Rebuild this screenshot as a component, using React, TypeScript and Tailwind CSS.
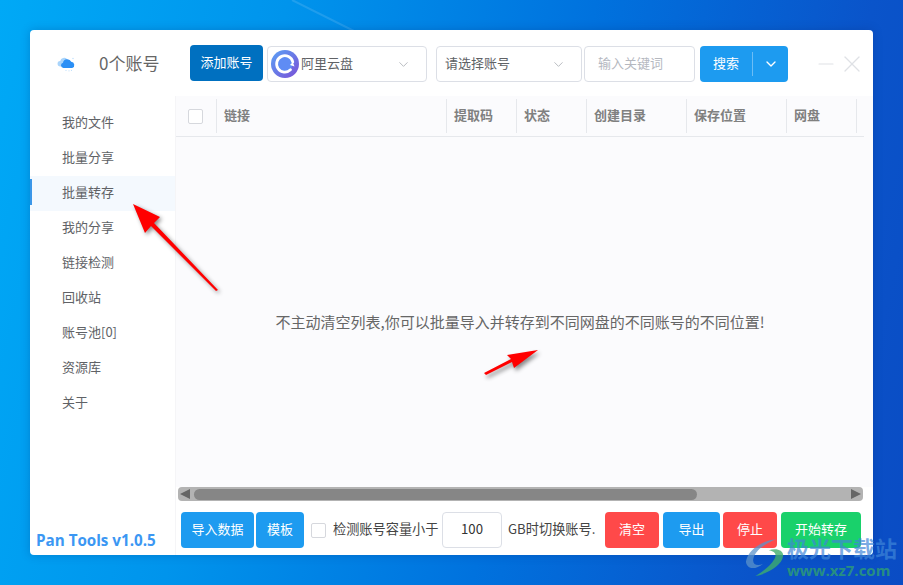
import { ChevronDown, X, Minus } from 'lucide-react'

const navItems = ['我的文件', '批量分享', '批量转存', '我的分享', '链接检测', '回收站', '账号池[0]', '资源库', '关于']

const columns = [
  { label: '链接', width: 'w-[230px]' },
  { label: '提取码', width: 'w-[70px]' },
  { label: '状态', width: 'w-[70px]' },
  { label: '创建目录', width: 'w-[100px]' },
  { label: '保存位置', width: 'w-[100px]' },
  { label: '网盘', width: 'w-[70px]' },
]

function CloudLogo() {
  return (
    <svg width="20" height="16" viewBox="0 0 20 16">
      <path d="M3.500 10.500a2.800 2.800 0 0 1-.3-5.600A4 4 0 0 1 10 3l-2 7.500z" fill="#a9d4fb" />
      <path d="M6.500 12a2.700 2.700 0 0 1-.5-5.300 4.300 4.300 0 0 1 8.200-.9 3.200 3.200 0 0 1 1 6.200z" fill="#2b8ff5" />
      <circle cx="16" cy="2.500" r="0.700" fill="#b9dcfb" />
      <circle cx="9" cy="14.500" r="0.600" fill="#b9dcfb" />
      <circle cx="12" cy="14.800" r="0.600" fill="#b9dcfb" />
      <circle cx="14.500" cy="14.300" r="0.600" fill="#b9dcfb" />
    </svg>
  )
}

function AliyunLogo() {
  return (
    <svg width="28" height="28" viewBox="0 0 28 28">
      <defs>
        <linearGradient id="ali" x1="0" y1="0" x2="1" y2="1">
          <stop offset="0" stopColor="#5aa2f6" />
          <stop offset="1" stopColor="#7a4fd6" />
        </linearGradient>
      </defs>
      <circle cx="14" cy="14" r="14" fill="url(#ali)" />
      <circle cx="14" cy="14" r="7.500" fill="#5f8cf4" />
      <path d="M19.500 19.800A8.200 8.200 0 1 1 21.800 12" fill="none" stroke="#fff" strokeWidth="2.800" strokeLinecap="round" />
      <path d="M21.800 12 23.500 16.500 19 15z" fill="#fff" />
    </svg>
  )
}

function Caret() {
  return <ChevronDown className="w-[15px] h-[15px] text-[#b4b7bd]" strokeWidth={1.5} />
}

function ActionButton({ label, color, width }: { label: string; color: string; width: string }) {
  return (
    <button className={`h-9 rounded-[4px] pb-[2px] text-white text-[13px] shrink-0 ${color} ${width}`}>
      {label}
    </button>
  )
}

export default function App() {
  return (
    <div
      className="relative w-[903px] h-[585px] overflow-hidden pt-[30px] pl-[30px] bg-[linear-gradient(102deg,#00a9f6_0%,#0094ec_28%,#0072de_58%,#0a54ca_85%,#0a4cc4_100%)]"
      style={{ fontFamily: '"Noto Sans CJK SC", "Open Sans", sans-serif' }}
    >
      {/* wallpaper streak */}
      <svg className="absolute left-0 top-0" width="903" height="60" viewBox="0 0 903 60">
        <path d="M292 0 392 50" stroke="#7cc4f5" strokeOpacity="0.25" strokeWidth="2" fill="none" />
      </svg>

      {/* window */}
      <div className="relative flex flex-col w-[843px] h-[525px] bg-white rounded-[4px] overflow-hidden text-[#606266] shadow-[0_0_10px_rgba(0,40,110,0.25)]">
        {/* header */}
        <div className="flex items-center h-[66px] shrink-0 pt-[2px]">
          <div className="flex items-center w-[160px] shrink-0 pl-[27px]">
            <CloudLogo />
            <span className="ml-[22px] -mt-[2px] text-[17px] text-[#666]">0个账号</span>
          </div>
          <button className="w-[73px] h-9 -mt-[2px] pb-[2px] rounded-[4px] bg-[#0070c0] text-white text-[13px] shrink-0">添加账号</button>
          <div className="flex items-center w-[160px] h-9 ml-[4px] pl-[3px] pr-[15px] border border-[#dcdfe6] rounded-[4px] shrink-0">
            <AliyunLogo />
            <span className="ml-[2px] pb-[2px] text-[13px] flex-1">阿里云盘</span>
            <Caret />
          </div>
          <div className="flex items-center w-[146px] h-9 ml-[9px] pl-[8px] pr-[15px] border border-[#dcdfe6] rounded-[4px] shrink-0">
            <span className="pb-[2px] text-[13px] flex-1">请选择账号</span>
            <Caret />
          </div>
          <div className="flex items-center w-[111px] h-9 ml-[2px] pl-[13px] border border-[#dcdfe6] rounded-[4px] shrink-0">
            <span className="pb-[2px] text-[13px] text-[#b5b8bf]">输入关键词</span>
          </div>
          <div className="flex items-center w-[88px] h-9 ml-[5px] bg-[#1d9bf0] rounded-[4px] text-white shrink-0">
            <span className="w-[52px] pb-[2px] text-center text-[13px]">搜索</span>
            <span className="w-px h-[24px] bg-[#6cbdf5]" />
            <ChevronDown className="w-[16px] h-[16px] ml-[10px]" strokeWidth={2} />
          </div>
          <div className="flex items-center ml-[26px] text-[#dfe1e5]">
            <Minus className="w-[24px] h-[24px]" strokeWidth={1.1} />
            <X className="w-[28px] h-[28px]" strokeWidth={1.1} />
          </div>
        </div>

        <div className="flex flex-1 min-h-0">
          {/* sidebar */}
          <div className="flex flex-col w-[146px] shrink-0 pt-[10px] border-r border-[#f5f5f7]">
            {navItems.map((item, i) => (
              <div
                key={item}
                className={`h-[35px] shrink-0 flex items-center pb-[3px] text-[13px] ${i === 2 ? 'bg-[#f4f9fe]' : ''}`}
              >
                <span className={`w-[2px] h-[26px] mr-[30px] ${i === 2 ? 'bg-[#3b97e8]' : ''}`} />
                {item}
              </div>
            ))}
            <div className="mt-auto pl-[6px] pb-[3px] text-[15.2px] font-bold text-[#3b97f3]" style={{ fontFamily: '"Open Sans", sans-serif' }}>
              Pan Tools v1.0.5
            </div>
          </div>

          {/* content */}
          <div className="flex flex-col flex-1 min-w-0">
            <div className="flex flex-col h-[391px] bg-[#fbfbfd] shrink-0">
              <div className="flex items-center h-[41px] w-[688px] shrink-0 border-b border-[#e6e8ec] pl-px">
                <div className="flex items-center justify-center w-[40px] h-[34px] pr-[3px] border-r border-[#e6e8ec]">
                  <span className="w-[15px] h-[15px] bg-white border border-[#d6d8dd] rounded-[2px]" />
                </div>
                {columns.map((col) => (
                  <div key={col.label} className={`flex items-center h-[34px] pl-[7px] pb-[2px] border-r border-[#e6e8ec] text-[13px] font-bold text-[#808080] ${col.width}`}>
                    {col.label}
                  </div>
                ))}
              </div>
              <div className="flex w-[688px] flex-1 items-center justify-center pt-[21px] text-[15px] text-[#666]">
                不主动清空列表,你可以批量导入并转存到不同网盘的不同账号的不同位置!
              </div>
            </div>

            {/* scrollbar */}
            <div className="flex items-center w-[685px] h-[14px] ml-[2px] bg-[#b3b3b3] rounded-[4px] shrink-0 px-[1px]">
              <svg width="12" height="12" viewBox="0 0 12 12" className="shrink-0"><path d="M1 6 11 1v10z" fill="#666" /></svg>
              <div className="w-[503px] h-[11px] ml-[3px] bg-[#868686] rounded-full" />
              <svg width="12" height="12" viewBox="0 0 12 12" className="ml-auto shrink-0"><path d="M11 6 1 1v10z" fill="#666" /></svg>
            </div>

            {/* footer */}
            <div className="flex items-center h-[36px] mt-[11px] ml-[5px] shrink-0 text-[13.2px] text-[#444]">
              <ActionButton label="导入数据" color="bg-[#1d9bf0]" width="w-[73px]" />
              <ActionButton label="模板" color="bg-[#1d9bf0] ml-[2px]" width="w-[48px]" />
              <span className="w-[15px] h-[15px] ml-[7px] border border-[#d6d8dd] rounded-[2px] shrink-0" />
              <span className="ml-[7px] pb-[2px] w-[106px] shrink-0 whitespace-nowrap">检测账号容量小于</span>
              <div className="flex items-center justify-center w-[60px] h-9 ml-[3px] pb-[2px] border border-[#dcdfe6] rounded-[4px] shrink-0 text-[#333]">100</div>
              <span className="ml-[6px] pb-[2px] w-[87px] shrink-0 whitespace-nowrap">GB时切换账号.</span>
              <ActionButton label="清空" color="bg-[#ff4949] ml-[10px]" width="w-[54px]" />
              <ActionButton label="导出" color="bg-[#1d9bf0] ml-[4px]" width="w-[57px]" />
              <ActionButton label="停止" color="bg-[#ff4949] ml-[3px]" width="w-[54px]" />
              <ActionButton label="开始转存" color="bg-[#19d16b] ml-[4px]" width="w-[80px]" />
            </div>
          </div>
        </div>
      </div>

      {/* annotation arrows */}
      <svg className="absolute left-[130px] top-[200px] drop-shadow-[2px_2px_2px_rgba(0,0,0,0.45)]" width="95" height="95" viewBox="0 0 95 95">
        <path d="M3 4 30 17 24 23 88 90 86 91 21 26 15 33z" fill="#f00" />
      </svg>
      <svg className="absolute left-[480px] top-[345px] drop-shadow-[2px_3px_2px_rgba(0,0,0,0.45)]" width="65" height="35" viewBox="0 0 65 35">
        <path d="M58 5 34 23 32 17 6 30 4 28 31 14 27 10z" fill="#f00" />
      </svg>

      {/* watermark */}
      <div className="absolute left-[743px] top-[537px] w-[158px] h-[42px]">
        <svg className="absolute left-0 top-0" width="42" height="40" viewBox="0 0 42 42">
          <path d="M2 26C4 14 18 4 34 2 22 7 12 14 10 22 8 29 14 31 20 28 12 35 3 34 2 26z" fill="#5c93c9" opacity="0.75" />
          <path d="M12 41C24 39 40 30 41 20 42 14 34 11 26 14 32 15 35 18 32 23 28 30 20 36 12 41z" fill="#3fae6c" opacity="0.8" />
        </svg>
        <span className="absolute left-[44px] top-[-4px] whitespace-nowrap text-[22px] font-bold leading-[28px] text-[#3f86d8]/70">极光下载站</span>
        <span className="absolute left-[44px] top-[24px] whitespace-nowrap text-[15px] font-bold leading-[18px] text-[#2fa070]/80" style={{ fontFamily: '"Open Sans", sans-serif' }}>www.xz7.com</span>
      </div>
    </div>
  )
}
